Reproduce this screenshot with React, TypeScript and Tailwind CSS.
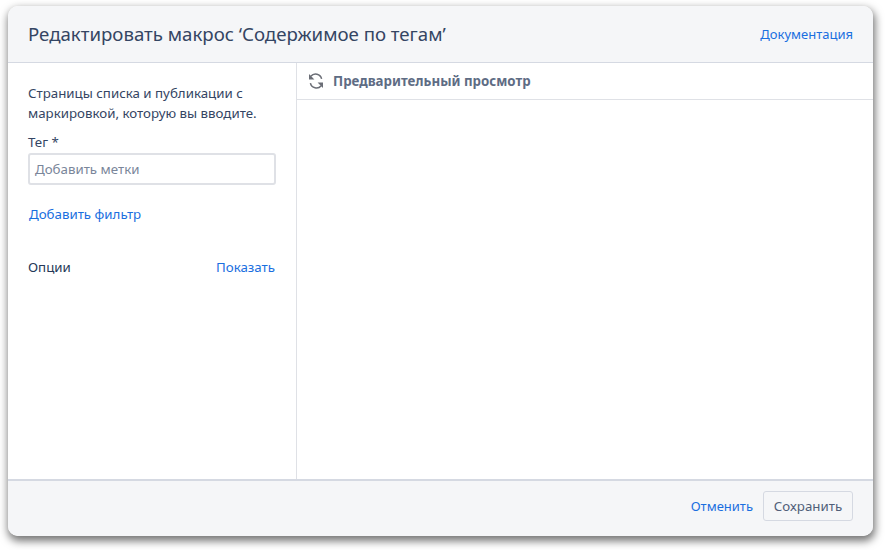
const font = { fontFamily: '"Noto Sans", "Open Sans", sans-serif' };

function SyncIcon() {
  return (
    <svg width="16" height="16" viewBox="0 0 16 16" fill="none" className="shrink-0 text-[#6b6e76]">
      <path d="M2.8 3.2A6.2 6.2 0 0 1 13.6 5.8" stroke="currentColor" strokeWidth="1.5" />
      <path d="M13.2 12.8A6.2 6.2 0 0 1 2.4 10.2" stroke="currentColor" strokeWidth="1.5" />
      <path d="M1 1v5.4h5.4z" fill="currentColor" />
      <path d="M15 15V9.6H9.6z" fill="currentColor" />
    </svg>
  );
}

export default function App() {
  return (
    <div className="w-[885px] h-[550px] bg-white pl-[8px] pt-[6px] overflow-hidden" style={font}>
      <div className="w-[865px] h-[530px] flex flex-col rounded-[10px] overflow-hidden bg-white shadow-[1px_4px_8px_1px_rgba(0,0,0,0.55)]">
        <header className="h-[57px] shrink-0 flex items-center justify-between px-[20px] bg-[#f5f6f8] border-b border-[#d5d9e2]">
          <h1 className="text-[18.65px] leading-[24px] font-normal text-[#344563]">Редактировать макрос ‘Содержимое по тегам’</h1>
          <a className="text-[13px] leading-[20px] text-[#1a6fe0]">Документация</a>
        </header>

        <div className="flex-1 flex min-h-0">
          <aside className="w-[289px] shrink-0 border-r border-[#dfe1e6] pl-[20px] pr-[20px] pt-[20px]">
            <p className="text-[13.3px] leading-[20px] text-[#344563]">Страницы списка и публикации с маркировкой, которую вы вводите.</p>
            <label className="block mt-[9px] text-[13.3px] leading-[20px] text-[#344563]">Тег *</label>
            <div className="mt-[1px] h-[32px] flex items-center rounded-[3px] border-2 border-[#dfe1e6] px-[5px] pt-[1px] text-[13.3px] text-[#7a869a]">Добавить метки</div>
            <a className="block mt-[19px] ml-[1px] text-[13.3px] leading-[20px] text-[#1a6fe0]">Добавить фильтр</a>
            <div className="mt-[33px] mr-[1px] flex items-center justify-between text-[13.3px] leading-[20px]">
              <span className="text-[#253858]">Опции</span>
              <a className="text-[#1a6fe0]">Показать</a>
            </div>
          </aside>

          <main className="flex-1">
            <div className="h-[37px] flex items-center gap-[9px] pl-[11px] border-b border-[#dfe1e6]">
              <SyncIcon />
              <span className="pt-[1px] text-[13.3px] font-bold text-[#5e6c84]">Предварительный просмотр</span>
            </div>
          </main>
        </div>

        <footer className="h-[57px] shrink-0 flex items-center justify-end gap-[10px] pr-[20px] pb-[5px] bg-[#f5f6f8] border-t-2 border-[#d5d9e2]">
          <a className="text-[13px] leading-[20px] text-[#1a6fe0]">Отменить</a>
          <button className="h-[30px] w-[90px] pt-[1px] rounded-[3px] border border-[#d5d9e2] text-[13.3px] text-[#505f79]">Сохранить</button>
        </footer>
      </div>
    </div>
  );
}
